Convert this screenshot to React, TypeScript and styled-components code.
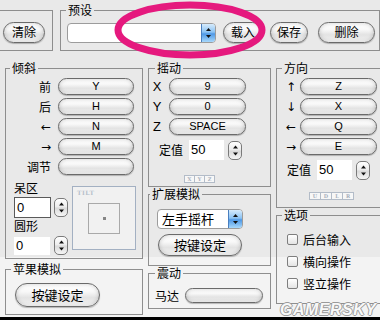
import React from 'react';
import styled, { createGlobalStyle } from 'styled-components';

const GlobalStyle = createGlobalStyle`
  html, body {
    margin: 0;
    padding: 0;
    background: #fff;
  }
`;

const Window = styled.div`
  position: relative;
  width: 380px;
  height: 320px;
  overflow: hidden;
  box-sizing: border-box;
  background: linear-gradient(to bottom, #e9e9e9 0, #e9e9e9 257px, #f3f3f3 257px);
  border-bottom: 3px solid #000;
  font-family: "Noto Sans CJK SC", "Noto Sans", sans-serif;
  font-size: 12px;
  color: #000;
`;

const TopRow = styled.div`
  display: flex;
  align-items: flex-start;
  height: 51px;
`;

const Main = styled.div`
  display: grid;
  grid-template-columns: 138px 123px 115px;
  column-gap: 5px;
  align-items: start;
  margin: 10px 0 0 5px;
`;

const Column = styled.div<{ $gap: number }>`
  display: flex;
  flex-direction: column;
  gap: ${p => p.$gap}px;
`;

const Group = styled.fieldset<{ $w?: number; $h: number }>`
  box-sizing: border-box;
  width: ${p => (p.$w ? `${p.$w}px` : 'auto')};
  height: ${p => p.$h}px;
  margin: 0;
  padding: 0;
  min-width: 0;
  border: 1px solid #8e8e8e;
`;

const Legend = styled.legend<{ $x: number }>`
  margin-left: ${p => p.$x - 3}px;
  padding: 0 2px;
  font-size: 12px;
  line-height: 14px;
`;

const Pill = styled.button<{ $w: number; $h: number; $size?: number }>`
  box-sizing: border-box;
  flex: none;
  width: ${p => p.$w}px;
  height: ${p => p.$h}px;
  padding: 0;
  border: 1px solid #6a6a6a;
  border-radius: ${p => p.$h / 2}px;
  background: linear-gradient(to bottom, #ffffff 0%, #f8f8f8 35%, #e3e3e3 62%, #ececec 85%, #fdfdfd 100%);
  box-shadow: inset 0 0 4px rgba(0, 0, 0, 0.2), 0 1px 1px rgba(0, 0, 0, 0.25);
  font-family: "Liberation Sans", "Noto Sans CJK SC", sans-serif;
  font-size: ${p => p.$size ?? 11}px;
  line-height: 1;
  color: #000;
`;

/* top row */

const ClearGroup = styled(Group)`
  margin: 10px 0 0 -10px;
`;

const ClearBody = styled.div`
  padding: 11px 0 0 12px;
`;

const PresetGroup = styled(Group)`
  margin: 3px 0 0 7px;
`;

const PresetBody = styled.div`
  display: flex;
  align-items: center;
  gap: 7px;
  padding: 5px 0 0 6px;
`;

const PopUp = styled.div<{ $w: number }>`
  box-sizing: border-box;
  display: flex;
  flex: none;
  width: ${p => p.$w}px;
  height: 20px;
  border: 1px solid #9c9c9c;
  border-radius: 4px;
  background: #fff;
  overflow: hidden;
`;

const PopUpText = styled.span`
  flex: 1;
  padding-left: 4px;
  font-size: 13px;
  line-height: 18px;
  white-space: nowrap;
`;

const PopUpArrows = styled.span`
  display: flex;
  align-items: center;
  justify-content: center;
  width: 13px;
  border-left: 1px solid #4a7fbf;
  background: linear-gradient(to bottom, #d6ebfc 0%, #8cc3f3 45%, #4e98e6 55%, #a7d8fb 100%);
`;

/* tilt */

const KeyList = styled.div<{ $label: number; $pill: number; $gap: number; $align: string }>`
  display: grid;
  grid-template-columns: ${p => p.$label}px ${p => p.$pill}px;
  grid-auto-rows: 17px;
  column-gap: ${p => p.$gap}px;
  row-gap: 3px;
  align-items: center;
  justify-items: ${p => p.$align};
`;

const KeyLabel = styled.span`
  font-size: 12px;
  line-height: 14px;
`;

const AxisLabel = styled.span`
  font-family: "Liberation Sans", sans-serif;
  font-size: 13px;
  line-height: 14px;
`;

const ArrowLabel = styled.span`
  font-family: "DejaVu Sans", sans-serif;
  font-size: 12px;
  line-height: 14px;
`;

const TiltBody = styled.div`
  padding: 3px 0 0 1px;
`;

const TiltLower = styled.div`
  display: grid;
  grid-template-columns: 54px 64px;
  column-gap: 4px;
  margin: 5px 0 0 7px;
`;

const DeadZone = styled.div`
  display: flex;
  flex-direction: column;
`;

const SmallCaption = styled.span<{ $top: number }>`
  margin-top: ${p => p.$top}px;
  font-size: 12px;
  line-height: 14px;
`;

const FieldRow = styled.div<{ $top: number; $gap: number }>`
  display: flex;
  align-items: center;
  gap: ${p => p.$gap}px;
  margin-top: ${p => p.$top}px;
`;

const NumBox = styled.span<{ $w: number; $h: number; $framed?: boolean }>`
  box-sizing: border-box;
  display: block;
  width: ${p => p.$w}px;
  height: ${p => p.$h}px;
  padding-left: 2px;
  background: #fff;
  border: ${p => (p.$framed ? '1px solid #5a5a5a' : 'none')};
  font-family: "Liberation Sans", sans-serif;
  font-size: 13px;
  line-height: ${p => p.$h - (p.$framed ? 2 : 0)}px;
`;

const StepperShell = styled.span`
  box-sizing: border-box;
  display: flex;
  align-items: center;
  justify-content: center;
  width: 14px;
  height: 19px;
  border: 1px solid #7a7a7a;
  border-radius: 5px;
  background: linear-gradient(to bottom, #ffffff 0%, #ececec 48%, #d9d9d9 52%, #f5f5f5 100%);
`;

const TiltPad = styled.div`
  position: relative;
  box-sizing: border-box;
  display: grid;
  place-items: center;
  width: 64px;
  height: 64px;
  margin-top: 6px;
  border: 1px solid #a3b0c2;
  background: #f1f1f1;
`;

const TiltCaption = styled.span`
  position: absolute;
  left: 4px;
  top: 2px;
  font-family: "DejaVu Serif", serif;
  font-weight: bold;
  font-size: 6px;
  letter-spacing: 0.5px;
  color: #b6bfcb;
`;

const TiltSquare = styled.div`
  box-sizing: border-box;
  display: grid;
  place-items: center;
  width: 32px;
  height: 31px;
  border: 1px solid #a9a9a9;
`;

const TiltDot = styled.span`
  width: 3px;
  height: 3px;
  background: #858585;
`;

/* apple */

const AppleBody = styled.div`
  padding: 7px 0 0 9px;
`;

/* joystick / direction */

const StickBody = styled.div<{ $left: number }>`
  padding: 3px 0 0 ${p => p.$left}px;
`;

const ValueRow = styled.div<{ $left: number }>`
  display: flex;
  align-items: center;
  gap: 4px;
  margin: 5px 0 0 ${p => p.$left}px;
  height: 20px;
`;

const ValueLabel = styled.span`
  width: 26px;
  font-size: 12px;
  line-height: 14px;
`;

const AxisStrip = styled.div<{ $top: number; $left: number }>`
  display: flex;
  margin: ${p => p.$top}px 0 0 ${p => p.$left}px;
`;

const AxisBox = styled.span<{ $w: number }>`
  box-sizing: border-box;
  width: ${p => p.$w}px;
  height: 8px;
  border: 1px solid #b3bcc8;
  margin-left: -1px;
  background: #f7f7f7;
  font-family: "DejaVu Serif", serif;
  font-weight: bold;
  font-size: 5px;
  line-height: 6px;
  text-align: center;
  color: #a7b0bc;
`;

/* extension */

const ExtBody = styled.div`
  display: flex;
  flex-direction: column;
  gap: 5px;
  padding: 8px 0 0 8px;
`;

const ExtButton = styled(Pill)`
  margin-left: 1px;
`;

const DeleteButton = styled(Pill)`
  margin-left: 3px;
`;

/* vibration */

const MotorRow = styled.div`
  display: flex;
  align-items: center;
  gap: 6px;
  padding: 8px 0 0 6px;
`;

/* options */

const OptionList = styled.div`
  display: grid;
  grid-auto-rows: 22px;
  padding: 6px 0 0 10px;
`;

const OptionRow = styled.label`
  display: flex;
  align-items: center;
  gap: 5px;
  font-size: 12px;
`;

const CheckBox = styled.span`
  box-sizing: border-box;
  width: 11px;
  height: 11px;
  border: 1px solid #7e7e7e;
  border-radius: 2px;
  background: linear-gradient(to bottom, #ffffff, #e4e4e4);
`;

/* overlays */

const Scribble = styled.svg`
  position: absolute;
  left: 108px;
  top: 0;
`;

const Watermark = styled.span`
  position: absolute;
  left: 280px;
  top: 303px;
  font-family: "Liberation Sans", sans-serif;
  font-weight: bold;
  font-style: italic;
  font-size: 16px;
  line-height: 14px;
  letter-spacing: 0.5px;
  color: #f8f8f8;
  text-shadow: 1px 0 0 #9a9a9a, -1px 0 0 #9a9a9a, 0 1px 0 #9a9a9a, 0 -1px 0 #9a9a9a;
`;

const UpDown: React.FC<{ h: number }> = ({ h }) => (
  <svg width="7" height={h} viewBox={`0 0 7 ${h}`}>
    <path d={`M3.5 ${h / 2 - 5} L6 ${h / 2 - 2} L1 ${h / 2 - 2} Z`} fill="#111" />
    <path d={`M3.5 ${h / 2 + 5} L6 ${h / 2 + 2} L1 ${h / 2 + 2} Z`} fill="#111" />
  </svg>
);

const Stepper = () => (
  <StepperShell>
    <UpDown h={17} />
  </StepperShell>
);

const PopUpSelect: React.FC<{ w: number; value?: string }> = ({ w, value }) => (
  <PopUp $w={w}>
    <PopUpText>{value}</PopUpText>
    <PopUpArrows>
      <UpDown h={16} />
    </PopUpArrows>
  </PopUp>
);

const tiltKeys: [string, string][] = [
  ['前', 'Y'],
  ['后', 'H'],
  ['←', 'N'],
  ['→', 'M'],
  ['调节', ''],
];

const stickKeys: [string, string][] = [
  ['X', '9'],
  ['Y', '0'],
  ['Z', 'SPACE'],
];

const dirKeys: [string, string][] = [
  ['↑', 'Z'],
  ['↓', 'X'],
  ['←', 'Q'],
  ['→', 'E'],
];

const isArrow = (s: string) => '←→↑↓'.includes(s);

const App: React.FC = () => (
  <Window>
    <GlobalStyle />
    <TopRow>
      <ClearGroup $w={65} $h={41}>
        <ClearBody>
          <Pill $w={42} $h={21} $size={12}>清除</Pill>
        </ClearBody>
      </ClearGroup>
      <PresetGroup $w={330} $h={48}>
        <Legend $x={8}>预设</Legend>
        <PresetBody>
          <PopUpSelect w={149} />
          <Pill $w={40} $h={21} $size={12}>载入</Pill>
          <Pill $w={38} $h={21} $size={12}>保存</Pill>
          <DeleteButton $w={57} $h={21} $size={12}>删除</DeleteButton>
        </PresetBody>
      </PresetGroup>
    </TopRow>

    <Main>
      <Column $gap={3}>
        <Group $h={198}>
          <Legend $x={7}>倾斜</Legend>
          <TiltBody>
            <KeyList $label={44} $pill={76} $gap={7} $align="end">
              {tiltKeys.map(([label, key]) => (
                <React.Fragment key={label}>
                  {isArrow(label) ? <ArrowLabel>{label}</ArrowLabel> : <KeyLabel>{label}</KeyLabel>}
                  <Pill $w={76} $h={17}>{key}</Pill>
                </React.Fragment>
              ))}
            </KeyList>
            <TiltLower>
              <DeadZone>
                <SmallCaption $top={1}>呆区</SmallCaption>
                <FieldRow $top={2} $gap={3}>
                  <NumBox $w={37} $h={21} $framed>0</NumBox>
                  <Stepper />
                </FieldRow>
                <SmallCaption $top={1}>圆形</SmallCaption>
                <FieldRow $top={3} $gap={4}>
                  <NumBox $w={36} $h={18}>0</NumBox>
                  <Stepper />
                </FieldRow>
              </DeadZone>
              <TiltPad>
                <TiltCaption>TILT</TiltCaption>
                <TiltSquare>
                  <TiltDot />
                </TiltSquare>
              </TiltPad>
            </TiltLower>
          </TiltBody>
        </Group>
        <Group $h={53}>
          <Legend $x={8}>苹果模拟</Legend>
          <AppleBody>
            <Pill $w={85} $h={24} $size={13}>按键设定</Pill>
          </AppleBody>
        </Group>
      </Column>

      <Column $gap={0}>
        <Group $h={126}>
          <Legend $x={9}>摇动</Legend>
          <StickBody $left={1}>
            <KeyList $label={14} $pill={77} $gap={5} $align="center">
              {stickKeys.map(([label, key]) => (
                <React.Fragment key={label}>
                  <AxisLabel>{label}</AxisLabel>
                  <Pill $w={77} $h={17}>{key}</Pill>
                </React.Fragment>
              ))}
            </KeyList>
            <ValueRow $left={9}>
              <ValueLabel>定值</ValueLabel>
              <NumBox $w={35} $h={20}>50</NumBox>
              <Stepper />
            </ValueRow>
            <AxisStrip $top={15} $left={35}>
              {['X', 'Y', 'Z'].map(a => (
                <AxisBox key={a} $w={11}>{a}</AxisBox>
              ))}
            </AxisStrip>
          </StickBody>
        </Group>
        <Group $h={79}>
          <Legend $x={4}>扩展模拟</Legend>
          <ExtBody>
            <PopUpSelect w={86} value="左手摇杆" />
            <ExtButton $w={84} $h={22} $size={13}>按键设定</ExtButton>
          </ExtBody>
        </Group>
        <Group $h={43}>
          <Legend $x={9}>震动</Legend>
          <MotorRow>
            <KeyLabel>马达</KeyLabel>
            <Pill $w={78} $h={15} />
          </MotorRow>
        </Group>
      </Column>

      <Column $gap={0}>
        <Group $w={116} $h={147}>
          <Legend $x={8}>方向</Legend>
          <StickBody $left={6}>
            <KeyList $label={16} $pill={77} $gap={1} $align="center">
              {dirKeys.map(([label, key]) => (
                <React.Fragment key={label}>
                  <ArrowLabel>{label}</ArrowLabel>
                  <Pill $w={77} $h={17}>{key}</Pill>
                </React.Fragment>
              ))}
            </KeyList>
            <ValueRow $left={4}>
              <ValueLabel>定值</ValueLabel>
              <NumBox $w={35} $h={20}>50</NumBox>
              <Stepper />
            </ValueRow>
            <AxisStrip $top={12} $left={27}>
              {['U', 'D', 'L', 'R'].map(a => (
                <AxisBox key={a} $w={12}>{a}</AxisBox>
              ))}
            </AxisStrip>
          </StickBody>
        </Group>
        <Group $w={116} $h={96}>
          <Legend $x={8}>选项</Legend>
          <OptionList>
            {['后台输入', '横向操作', '竖立操作'].map(o => (
              <OptionRow key={o}>
                <CheckBox />
                {o}
              </OptionRow>
            ))}
          </OptionList>
        </Group>
      </Column>
    </Main>

    <Scribble width="170" height="66" viewBox="0 0 170 66">
      <ellipse cx="82" cy="30" rx="72" ry="25" fill="none" stroke="#e5197e" strokeWidth="7" />
    </Scribble>
    <Watermark>GAMERSKY</Watermark>
  </Window>
);

export default App;
